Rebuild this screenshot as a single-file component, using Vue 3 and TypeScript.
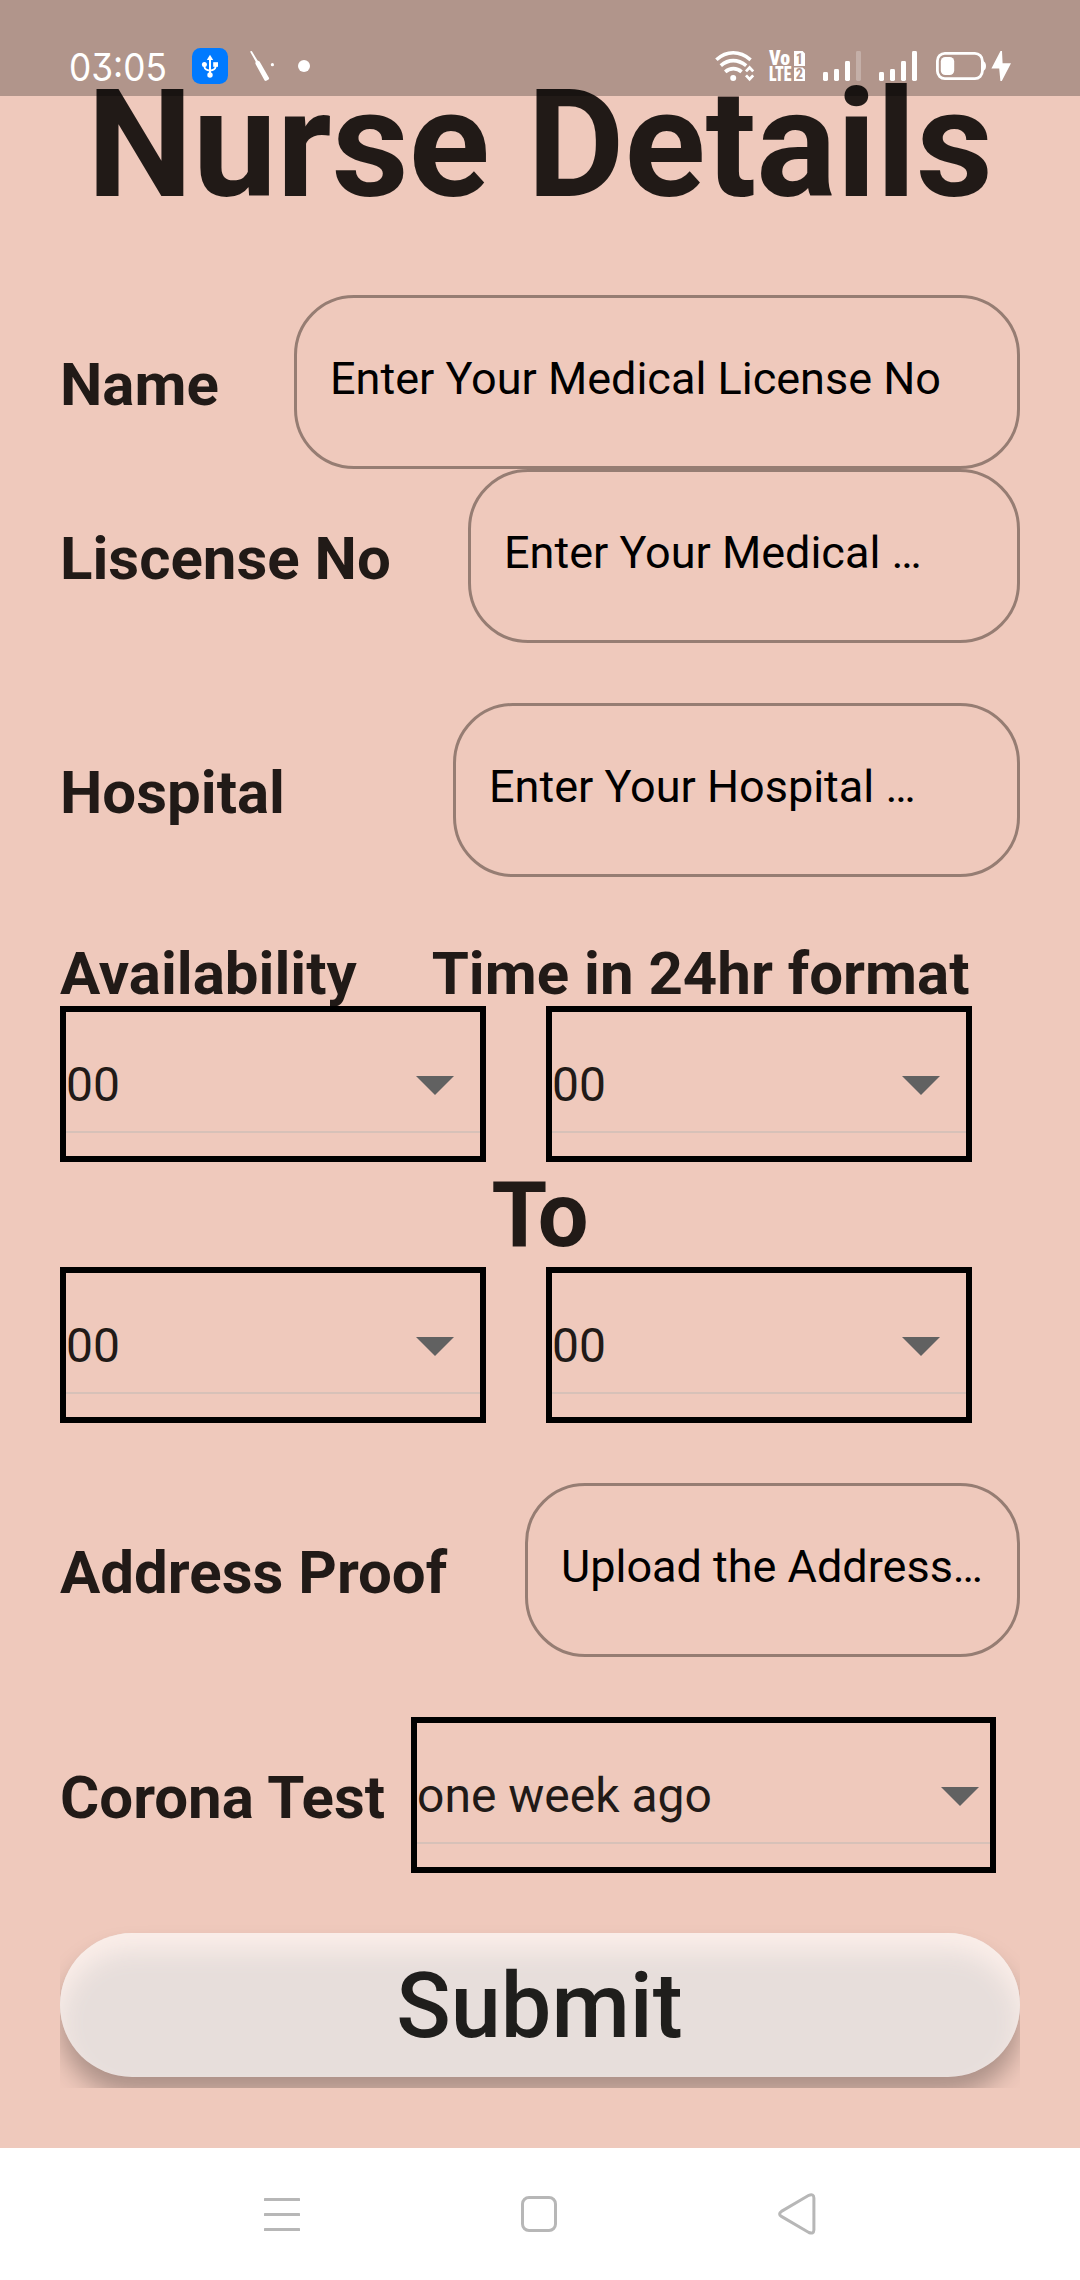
<script setup lang="ts">
interface Field {
  label: string
  hint: string
  width: number
  spaced: boolean
}

const fields: Field[] = [
  { label: 'Name', hint: 'Enter Your Medical License No', width: 726, spaced: false },
  { label: 'Liscense No', hint: 'Enter Your Medical …', width: 552, spaced: true },
  { label: 'Hospital', hint: 'Enter Your Hospital …', width: 567, spaced: true },
]

const from: string[] = ['00', '00']
const to: string[] = ['00', '00']

// x, top of each signal bar; every bar stands on the same baseline
const bars: [number, number][] = [[0, 21], [11, 18], [22, 10], [33, 0]]
</script>

<template>
  <div class="screen">
    <header class="status">
      <span class="clock">03:05</span>
      <svg class="usb" width="36" height="36" viewBox="0 0 36 36">
        <rect width="36" height="36" rx="8.5" fill="#007aff" />
        <g fill="#fff">
          <path d="M18 6.8l3.2 5.2h-6.4z" />
          <path d="M17 10h2v18h-2z" />
          <circle cx="18" cy="27" r="2.7" />
          <circle cx="12.4" cy="16.4" r="2.5" />
          <rect x="21.2" y="14.2" width="4.8" height="4.6" />
        </g>
        <path d="M12.4 16.5v2.2q.4 3.6 5.6 4q5.2-.4 5.6-4v-2.2" fill="none" stroke="#fff" stroke-width="1.8" />
      </svg>
      <svg class="knife" width="26" height="32" viewBox="0 0 26 32">
        <path d="M0 .6L1.8 0L7.6 9.6L9.6 10.4L19.2 27.2L18.6 28.6L15.8 30L14.6 29.4L5.4 12.8L5.6 10.6Z" fill="#fff" />
        <circle cx="22.4" cy="13.7" r="1.6" fill="#fff" />
      </svg>
      <svg class="dot" width="12" height="12" viewBox="0 0 12 12"><circle cx="6" cy="6" r="6" fill="#fff" /></svg>
      <div class="system">
        <svg class="wifi" width="40" height="30" viewBox="0 0 40 30">
          <g fill="none" stroke="#fff" stroke-width="3.6">
            <path d="M1.4 8.8Q9 1.8 18.2 1.8T35.6 8.8" />
            <path d="M5.8 14.6Q11.6 9.6 18.2 9.6T31.2 14.6" />
            <path d="M10.2 20.8Q13.8 17.6 18.4 17.6T26.6 20.8" />
          </g>
          <circle cx="18.2" cy="27" r="3" fill="#fff" />
          <path d="M31 20.4l3.6-3.8l3.6 3.8M31 24.4l3.6 3.8l3.6-3.8" fill="none" stroke="#fff" stroke-width="2.8" />
        </svg>
        <svg class="volte" width="37" height="30" viewBox="0 0 37 30">
          <g class="volte-text">
            <text x="0" y="14" textLength="21" lengthAdjust="spacingAndGlyphs">Vo</text>
            <text x="0" y="29.7" textLength="22.5" lengthAdjust="spacingAndGlyphs">LTE</text>
          </g>
          <path d="M25 0h8.6l2.4 2.4V15H25z M25 16.4h8.6l2.4 2.4V30H25z" fill="#fff" />
          <g class="volte-num">
            <text x="30.5" y="12.7" text-anchor="middle">1</text>
            <text x="30.5" y="28.3" text-anchor="middle">2</text>
          </g>
        </svg>
        <svg class="signal-a" width="38" height="30" viewBox="0 0 38 30" fill="#fff">
          <rect v-for="([x, y], i) in bars" :key="x" :x="x" :y="y" width="5" :height="30 - y" rx="1.4" :opacity="i === 3 ? 0.25 : 1" />
        </svg>
        <svg class="signal-b" width="38" height="30" viewBox="0 0 38 30" fill="#fff">
          <rect v-for="[x, y] in bars" :key="x" :x="x" :y="y" width="5" :height="30 - y" rx="1.4" />
        </svg>
        <svg class="battery" width="76" height="30" viewBox="0 0 76 30">
          <rect x="1.4" y="2.4" width="45" height="25.2" rx="7.5" fill="none" stroke="#fff" stroke-width="2.8" />
          <path d="M47 10q3 1 3 5t-3 5z" fill="#fff" />
          <rect x="4.8" y="6" width="13.4" height="18" rx="4.5" fill="#fff" />
          <path d="M64.5 0L55.4 17.6h7.8L64.4 30h1.4L75 12.2h-8.4L66 0z" fill="#fff" />
        </svg>
      </div>
    </header>

    <main class="page">
      <h1 class="title">Nurse Details</h1>

      <div v-for="f in fields" :key="f.label" class="row" :class="{ spaced: f.spaced }">
        <label class="label">{{ f.label }}</label>
        <div class="input" :style="{ width: f.width + 'px' }">{{ f.hint }}</div>
      </div>

      <div class="heading">
        <span>Availability</span>
        <span>Time in 24hr format</span>
      </div>
      <div class="pair">
        <div v-for="(v, i) in from" :key="i" class="select">
          <div class="value"><span>{{ v }}</span><i class="arrow"></i></div>
        </div>
      </div>
      <div class="to">To</div>
      <div class="pair spaced">
        <div v-for="(v, i) in to" :key="i" class="select">
          <div class="value"><span>{{ v }}</span><i class="arrow"></i></div>
        </div>
      </div>

      <div class="row spaced">
        <label class="label">Address Proof</label>
        <div class="input proof">Upload the Address…</div>
      </div>

      <div class="row spaced corona">
        <label class="label">Corona Test</label>
        <div class="select wide">
          <div class="value"><span>one week ago</span><i class="arrow"></i></div>
        </div>
      </div>

      <div class="clip"><button class="submit">Submit</button></div>
    </main>

    <nav class="nav">
      <svg width="36" height="33" viewBox="0 0 36 33" fill="#b7b7b7">
        <rect width="36" height="3" rx=".6" /><rect y="15" width="36" height="3" rx=".6" /><rect y="30" width="36" height="3" rx=".6" />
      </svg>
      <svg width="36" height="36" viewBox="0 0 36 36">
        <rect x="1.5" y="1.5" width="33" height="33" rx="6.5" fill="none" stroke="#b7b7b7" stroke-width="3" />
      </svg>
      <svg width="38" height="42" viewBox="0 0 38 42">
        <path d="M3.4 18.4L30.8 2.3Q35.7.4 35.9 5V37Q35.7 41.4 30.8 39.5L3.4 23.4Q-.2 20.9 3.4 18.4Z" fill="none" stroke="#b7b7b7" stroke-width="3" />
      </svg>
    </nav>
  </div>
</template>

<style>
body {
  margin: 0;
}
</style>

<style scoped>
.screen {
  position: relative;
  display: flex;
  flex-direction: column;
  width: 1080px;
  height: 2280px;
  overflow: hidden;
  background: #efc9bc;
  color: #211a17;
  font-family: Roboto, sans-serif;
}

.status {
  position: absolute;
  z-index: 1;
  top: 0;
  left: 0;
  display: flex;
  align-items: flex-start;
  box-sizing: border-box;
  width: 1080px;
  height: 96px;
  padding: 48px 68px 0 69px;
  background: rgba(0, 0, 0, 0.26);
  color: #fff;
}

.status svg {
  flex: none;
  overflow: visible;
}

.clock {
  width: 123px;
  margin-top: -3px;
  font: 400 37.5px/45px Inter, sans-serif;
  font-feature-settings: 'cv09';
  transform: scaleX(0.94);
  transform-origin: left;
}

.knife {
  margin: 3px 0 0 22px;
}

.dot {
  margin: 12px 0 0 22px;
}

.system {
  display: flex;
  margin: 3px 0 0 auto;
}

.volte {
  margin-left: 14px;
}

.signal-a {
  margin-left: 17px;
}

.signal-b {
  margin-left: 18px;
}

.battery {
  margin-left: 19px;
}

.volte-text {
  fill: #fff;
  font: 900 19.5px 'Roboto Condensed', Roboto, sans-serif;
}

.volte-num {
  fill: #b1958b;
  font: 700 14.5px 'Roboto Condensed', Roboto, sans-serif;
}

.page {
  flex: none;
  box-sizing: border-box;
  height: 2148px;
  padding: 57px 60px 0;
}

.title {
  margin: 0 0 62px;
  font-size: 150px;
  font-weight: 700;
  line-height: 176px;
  text-align: center;
  white-space: nowrap;
}

.row {
  display: flex;
  align-items: center;
  justify-content: space-between;
}

.spaced {
  margin-bottom: 60px;
}

.label {
  padding-top: 5px;
  font-size: 60px;
  font-weight: 700;
  line-height: 71px;
  white-space: nowrap;
}

.input {
  box-sizing: border-box;
  height: 174px;
  padding: 54px 0 0 33px;
  border: 3px solid #967d73;
  border-radius: 60px;
  color: #000;
  font-size: 45px;
  line-height: 53px;
  white-space: nowrap;
}

.proof {
  width: 495px;
}

.heading {
  display: flex;
  gap: 75px;
  box-sizing: border-box;
  height: 69px;
  padding-top: 1px;
  font-size: 60px;
  font-weight: 700;
  line-height: 71px;
  white-space: nowrap;
}

.pair {
  display: flex;
  gap: 60px;
}

.select {
  position: relative;
  box-sizing: border-box;
  width: 426px;
  height: 156px;
  border: 6px solid #000;
}

.value {
  display: flex;
  align-items: center;
  justify-content: space-between;
  box-sizing: border-box;
  height: 121px;
  padding: 25px 26px 0 0;
  border-bottom: 2px solid #d7c1b8;
  font-size: 48px;
  line-height: 57px;
}

.arrow {
  width: 38px;
  height: 19px;
  margin-top: 3px;
  background: #616161;
  clip-path: polygon(0 0, 100% 0, 50% 100%);
}

.corona {
  justify-content: flex-start;
}

.corona .label {
  width: 351px;
}

.wide {
  width: 585px;
}

.wide .value {
  padding-right: 11px;
}

.to {
  box-sizing: border-box;
  height: 105px;
  padding: 1px 2px 0 0;
  font-size: 90px;
  font-weight: 700;
  letter-spacing: -2px;
  line-height: 105px;
  text-align: center;
}

.clip {
  clip-path: inset(-20px 0 -11px 0);
}

.submit {
  display: block;
  width: 100%;
  height: 144px;
  padding: 3px 1px 0 0;
  border: 0;
  border-radius: 72px;
  background: #e7dedb;
  box-shadow:
    0 18px 24px rgba(0, 0, 0, 0.28),
    inset 0 18px 24px #fbeee9;
  color: #1f1e1c;
  font: 500 90px/105px Roboto, sans-serif;
}

.nav {
  display: flex;
  flex: none;
  align-items: center;
  justify-content: space-between;
  box-sizing: border-box;
  height: 132px;
  padding: 0 264px 0 264px;
  background: #fff;
}
</style>
